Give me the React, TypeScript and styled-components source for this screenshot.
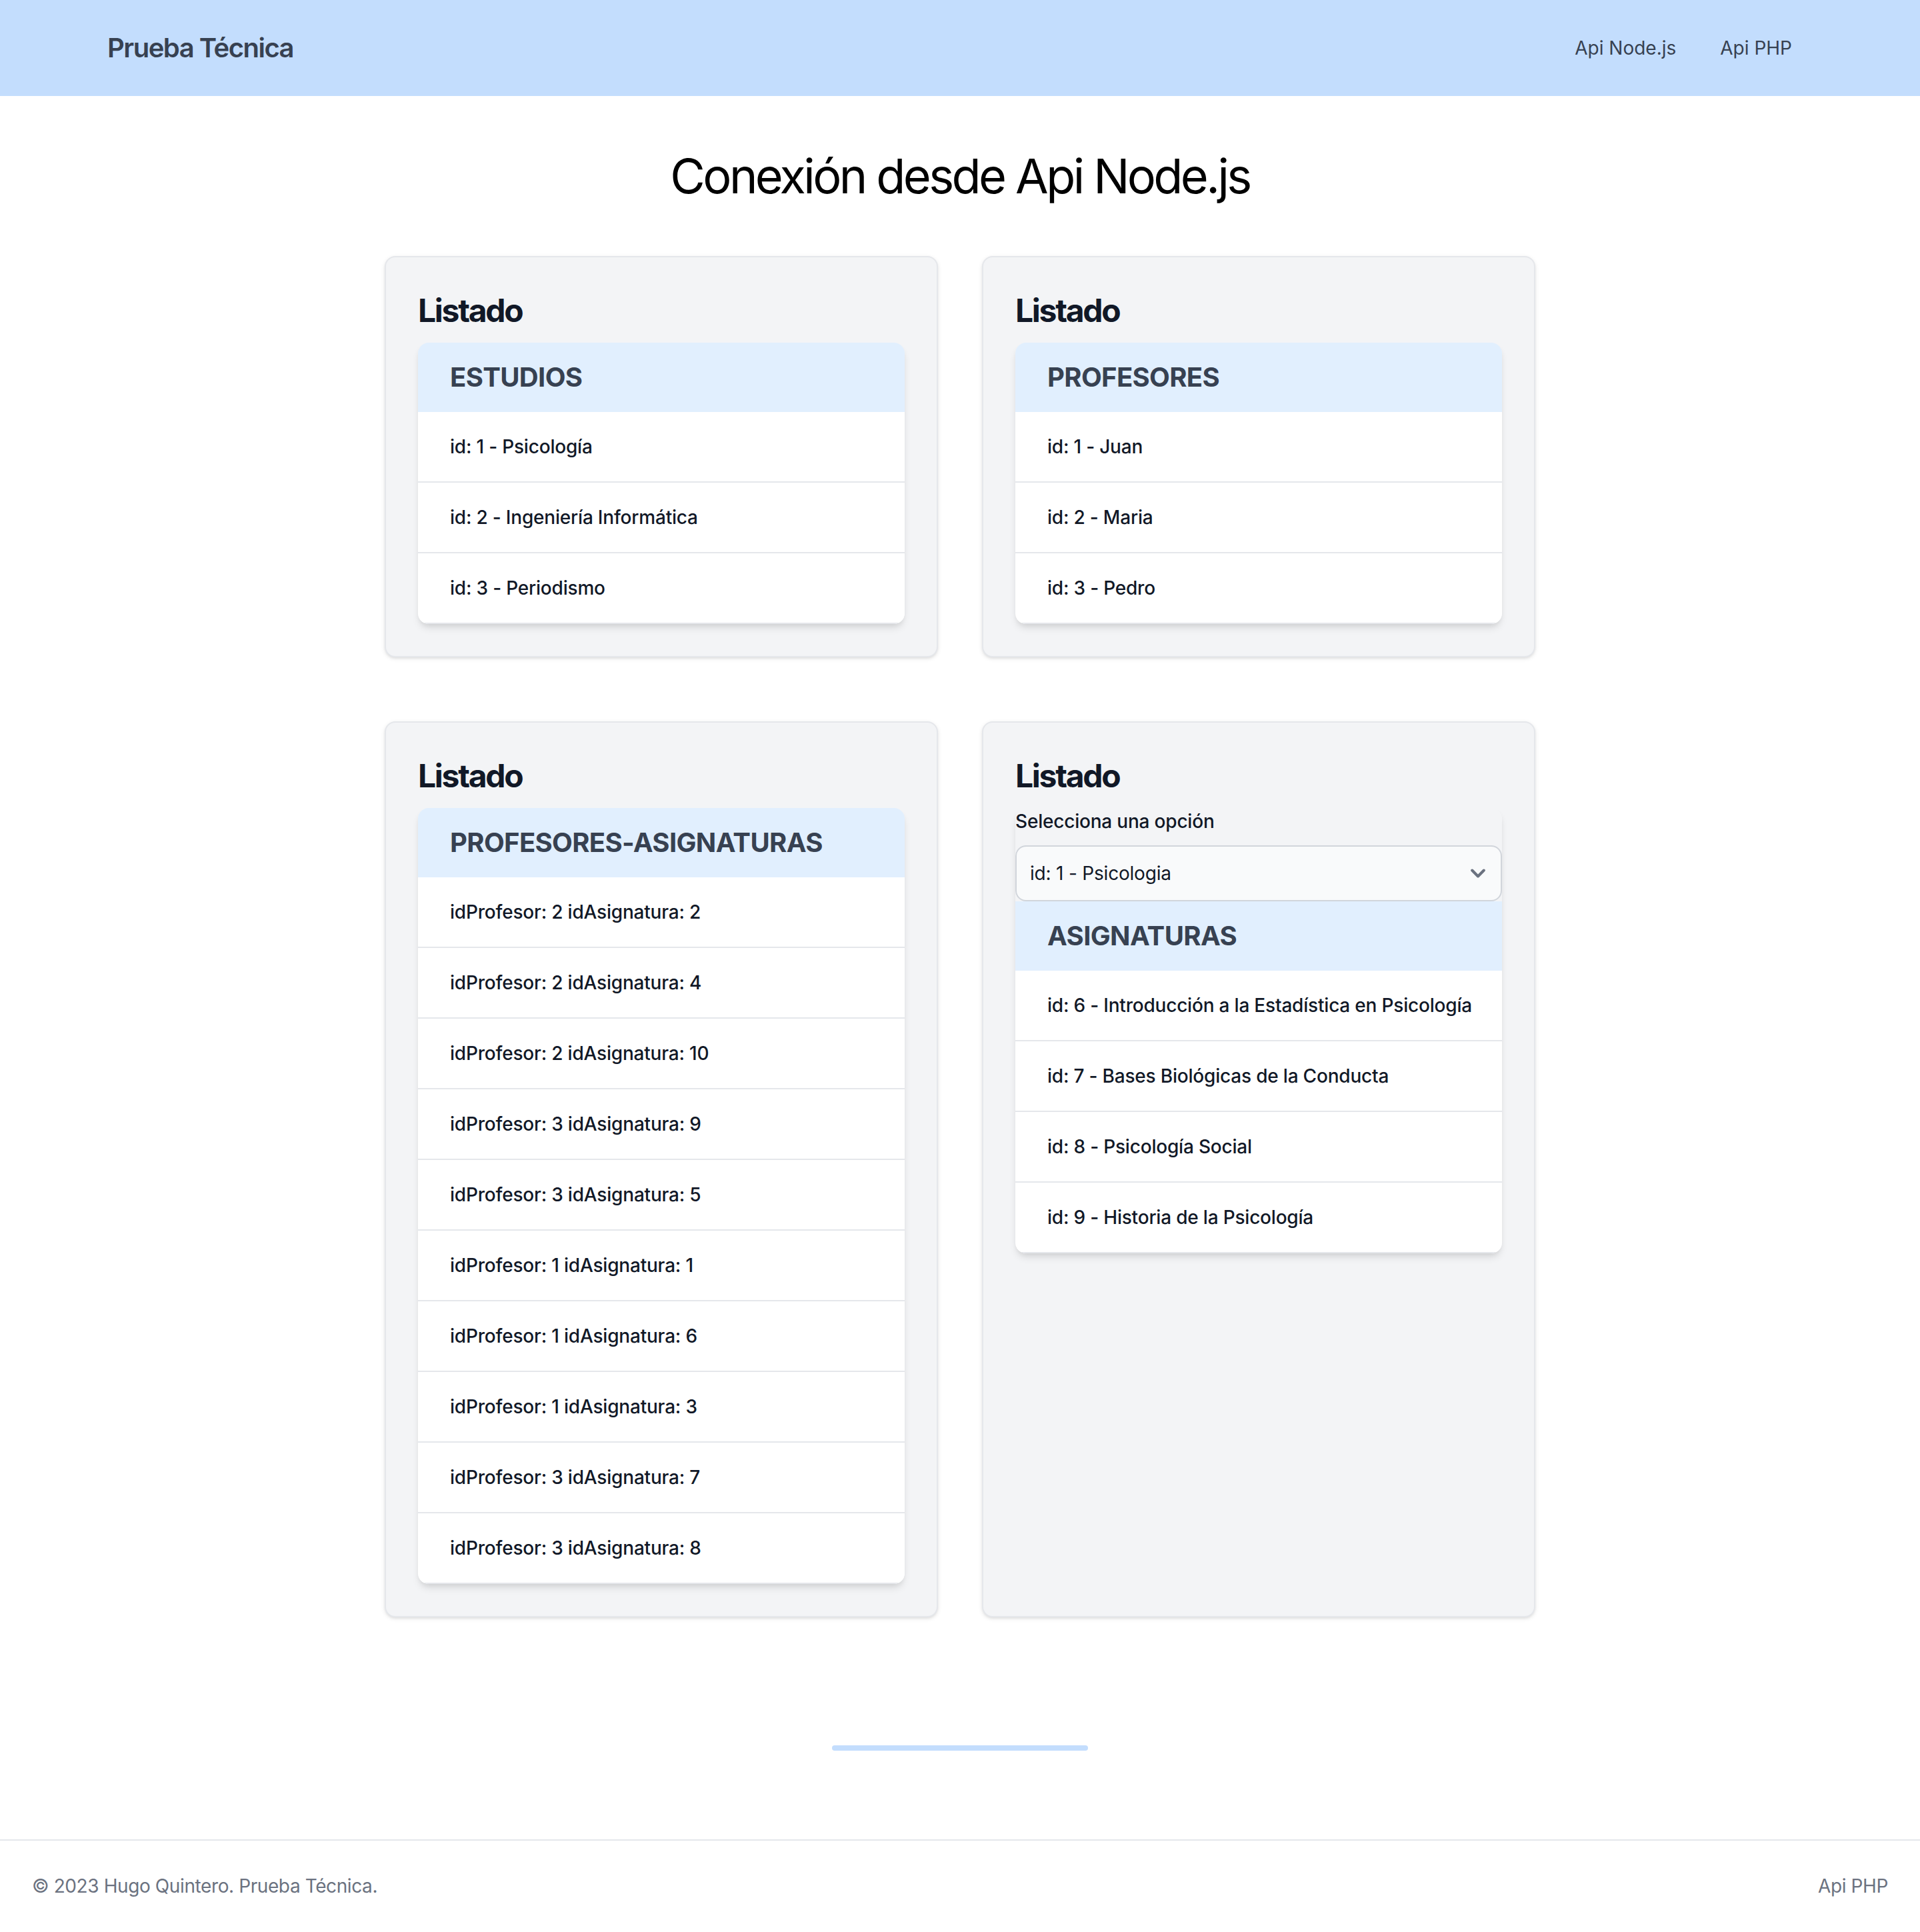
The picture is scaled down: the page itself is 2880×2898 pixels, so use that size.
import React from "react";
import styled, { createGlobalStyle } from "styled-components";

const GlobalStyle = createGlobalStyle`
  html, body { margin: 0; padding: 0; background: #ffffff; }
  body { font-family: Inter, "Noto Sans", Roboto, sans-serif; color: #000; }
  * { box-sizing: border-box; }
`;

const NavBar = styled.nav`
  height: 144px;
  background: #c3ddfd;
  display: flex;
  align-items: center;
  justify-content: space-between;
  padding: 0 192px 0 161px;
`;

const Brand = styled.span`
  font-size: 40px;
  line-height: 56px;
  font-weight: 600;
  color: #374151;
  letter-spacing: -1.5px;
`;

const NavLinks = styled.ul`
  display: flex;
  gap: 66px;
  list-style: none;
  margin: 0;
  padding: 0;
`;

const NavLink = styled.li`
  font-size: 28px;
  line-height: 40px;
  color: #374151;
`;

const Main = styled.main`
  display: flex;
  flex-direction: column;
  align-items: center;
`;

const PageTitle = styled.h1`
  margin: 80px 0;
  font-size: 72px;
  line-height: 80px;
  font-weight: 400;
  color: #000;
  letter-spacing: -3.6px;
  text-align: center;
`;

const Grid = styled.div`
  display: grid;
  grid-template-columns: 830px 830px;
  column-gap: 66px;
  row-gap: 96px;
`;

const Card = styled.section`
  background: #f3f4f6;
  border: 2px solid #e5e7eb;
  border-radius: 16px;
  padding: 48px;
  box-shadow: 0 2px 6px 0 rgba(0, 0, 0, 0.1), 0 2px 4px -2px rgba(0, 0, 0, 0.1);
`;

const CardTitle = styled.h2`
  margin: 0 0 16px;
  font-size: 48px;
  line-height: 64px;
  font-weight: 700;
  color: #111827;
  letter-spacing: -2.3px;
`;

const TableWrap = styled.div`
  border-radius: 16px;
  overflow: hidden;
  box-shadow: 0 8px 12px -2px rgba(0, 0, 0, 0.1), 0 4px 8px -4px rgba(0, 0, 0, 0.1);
`;

const TableHead = styled.div`
  background: #e1effe;
  padding: 24px 48px;
  font-size: 40px;
  line-height: 56px;
  font-weight: 700;
  color: #374151;
  text-transform: uppercase;
  letter-spacing: -0.65px;
`;

const Row = styled.div`
  background: #ffffff;
  padding: 32px 48px;
  border-bottom: 2px solid #e5e7eb;
  font-size: 28px;
  line-height: 40px;
  font-weight: 500;
  color: #111827;
  white-space: nowrap;
  letter-spacing: -0.2px;
`;

const Label = styled.label`
  display: block;
  margin-bottom: 16px;
  font-size: 28px;
  line-height: 40px;
  font-weight: 500;
  color: #111827;
  letter-spacing: -0.2px;
`;

const SelectBox = styled.div`
  display: flex;
  align-items: center;
  justify-content: space-between;
  height: 84px;
  padding: 0 12px 0 20px;
  background: #f9fafb;
  border: 2px solid #d1d5db;
  border-radius: 16px;
  font-size: 28px;
  line-height: 40px;
  color: #111827;
  letter-spacing: -0.2px;
`;

const SelectHead = styled(TableHead)``;

const Divider = styled.hr`
  width: 384px;
  height: 8px;
  margin: 192px auto 133px;
  border: 0;
  border-radius: 8px;
  background: #c3ddfd;
`;

const Footer = styled.footer`
  border-top: 2px solid #e5e7eb;
  padding: 48px;
  display: flex;
  justify-content: space-between;
  align-items: center;
  font-size: 28px;
  line-height: 40px;
  color: #6b7280;
  letter-spacing: -0.4px;
`;

const Chevron = () => (
  <svg width="44" height="44" viewBox="0 0 20 20" fill="none" aria-hidden>
    <path d="M6 8l4 4 4-4" stroke="#6b7280" strokeWidth="1.9" strokeLinecap="round" strokeLinejoin="round" />
  </svg>
);

const estudios = ["id: 1 - Psicología", "id: 2 - Ingeniería Informática", "id: 3 - Periodismo"];
const profesores = ["id: 1 - Juan", "id: 2 - Maria", "id: 3 - Pedro"];
const profAsig: [number, number][] = [
  [2, 2], [2, 4], [2, 10], [3, 9], [3, 5], [1, 1], [1, 6], [1, 3], [3, 7], [3, 8],
];
const asignaturas = [
  "id: 6 - Introducción a la Estadística en Psicología",
  "id: 7 - Bases Biológicas de la Conducta",
  "id: 8 - Psicología Social",
  "id: 9 - Historia de la Psicología",
];

const ListCard: React.FC<{ head: string; rows: string[] }> = ({ head, rows }) => (
  <Card>
    <CardTitle>Listado</CardTitle>
    <TableWrap>
      <TableHead>{head}</TableHead>
      {rows.map((r) => (
        <Row key={r}>{r}</Row>
      ))}
    </TableWrap>
  </Card>
);

export default function App() {
  return (
    <>
      <GlobalStyle />
      <NavBar>
        <Brand>Prueba Técnica</Brand>
        <NavLinks>
          <NavLink>Api Node.js</NavLink>
          <NavLink>Api PHP</NavLink>
        </NavLinks>
      </NavBar>
      <Main>
        <PageTitle>Conexión desde Api Node.js</PageTitle>
        <Grid>
          <ListCard head="Estudios" rows={estudios} />
          <ListCard head="Profesores" rows={profesores} />
          <ListCard
            head="Profesores-Asignaturas"
            rows={profAsig.map(([p, a]) => `idProfesor: ${p} idAsignatura: ${a}`)}
          />
          <Card>
            <CardTitle>Listado</CardTitle>
            <TableWrap>
              <Label>Selecciona una opción</Label>
              <SelectBox>
                <span>id: 1 - Psicologia</span>
                <Chevron />
              </SelectBox>
              <SelectHead>Asignaturas</SelectHead>
              {asignaturas.map((r) => (
                <Row key={r}>{r}</Row>
              ))}
            </TableWrap>
          </Card>
        </Grid>
        <Divider />
      </Main>
      <Footer>
        <span>© 2023 Hugo Quintero. Prueba Técnica.</span>
        <span>Api PHP</span>
      </Footer>
    </>
  );
}
